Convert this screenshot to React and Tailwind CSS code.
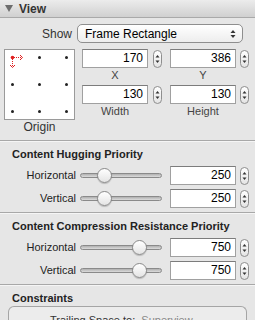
import React from "react";

const font = { fontFamily: '"Liberation Sans", Arial, sans-serif' };

const Stepper = () => (
  <div className="flex h-[18px] w-[9px] items-center justify-center rounded-[5px] border border-[#8e8e8e] bg-gradient-to-b from-white to-[#e4e4e4]">
    <svg width="5" height="12" viewBox="0 0 5 12">
      <path d="M2.5 2 L4.5 4.5 L0.5 4.5 Z" fill="#333" />
      <path d="M2.5 10 L4.5 7.5 L0.5 7.5 Z" fill="#333" />
    </svg>
  </div>
);

const NumberField = ({ value, gap = "gap-[4px]" }) => (
  <div className={`flex items-center ${gap}`}>
    <div className="h-[19px] w-[66px] border border-[#a0a0a0] border-t-[#7c7c7c] bg-white pr-[4px] text-right text-[12px] leading-[17px] text-black">
      {value}
    </div>
    <Stepper />
  </div>
);

const Slider = ({ pos }) => (
  <div className="relative h-[15px] w-[82px]">
    <div className="absolute left-0 right-0 top-[5px] h-[5px] rounded-full border border-[#8a8a8a] bg-gradient-to-b from-[#b0b0b0] to-[#dcdcdc]" />
    <div
      className="absolute top-0 h-[15px] w-[15px] rounded-full border border-[#8a8a8a] bg-gradient-to-b from-white to-[#e4e4e4] shadow-[0_1px_1px_rgba(0,0,0,0.2)]"
      style={{ left: pos }}
    />
  </div>
);

const Divider = ({ className = "" }) => (
  <div className={`border-t border-[#a8a8a8] shadow-[0_1px_0_#f5f5f5] ${className}`} />
);

const PriorityRow = ({ label, pos, value }) => (
  <div className="flex h-[23px] items-center">
    <div className="w-[76px] text-right text-[11px] text-[#222]">{label}</div>
    <div className="ml-[4px]">
      <Slider pos={pos} />
    </div>
    <div className="ml-[8px]">
      <NumberField value={value} />
    </div>
  </div>
);

const SectionTitle = ({ children }) => (
  <div className="h-[23px] px-[12px] pt-[6px] text-[11px] font-bold leading-[14px] text-[#222]">
    {children}
  </div>
);

const Dot = () => <div className="h-[3px] w-[3px] rounded-full bg-[#222]" />;

const FrameField = ({ value, label, gap }) => (
  <div className="flex flex-col items-start">
    <NumberField value={value} gap={gap} />
    <div className="mt-[1px] w-[66px] text-center text-[11px] leading-[13px] text-[#444]">{label}</div>
  </div>
);

const OriginMarker = () => (
  <div className="relative h-[3px] w-[3px]">
    <svg className="absolute left-[-2px] top-[-2px]" width="20" height="18" viewBox="0 0 20 18">
      <circle cx="3.5" cy="3.5" r="1.8" fill="#e02020" />
      <path d="M5 3.5 H13" stroke="#e02020" strokeWidth="1" strokeDasharray="1 1" />
      <path d="M11 1 L13.5 3.5 L11 6" stroke="#e02020" fill="none" strokeWidth="1" />
      <path d="M3.5 5 V13" stroke="#e02020" strokeWidth="1" strokeDasharray="1 1" />
      <path d="M1 11 L3.5 13.5 L6 11" stroke="#e02020" fill="none" strokeWidth="1" />
    </svg>
  </div>
);

export default function App() {
  return (
    <div style={font} className="h-[320px] w-[255px] overflow-hidden bg-[#e6e6e6] text-[#222]">
      <div className="flex h-[18px] items-center border-b border-[#a9a9a9] bg-gradient-to-b from-[#ececec] to-[#d0d0d0] pl-[5px]">
        <svg width="8" height="7" viewBox="0 0 8 7">
          <path d="M0 0 L8 0 L4 7 Z" fill="#6d6d6d" />
        </svg>
        <span className="ml-[6px] text-[12px] font-bold text-[#333]">View</span>
      </div>

      <div className="mt-[6px] flex items-center">
        <div className="w-[77px] pr-[5px] text-right text-[12px] text-[#333]">Show</div>
        <div className="flex h-[19px] w-[166px] items-center justify-between rounded-[5px] border border-[#8e8e8e] bg-gradient-to-b from-white to-[#ededed] pl-[7px] pr-[6px] text-[12px] text-black">
          <span>Frame Rectangle</span>
          <svg width="6" height="10" viewBox="0 0 6 10">
            <path d="M3 1 L5.5 4 L0.5 4 Z" fill="#333" />
            <path d="M3 9 L5.5 6 L0.5 6 Z" fill="#333" />
          </svg>
        </div>
      </div>

      <div className="mt-[6px] flex items-start">
        <div className="ml-[4px] flex w-[71px] flex-col items-center">
          <div className="flex h-[71px] w-[71px] flex-col justify-between border border-[#9a9a9a] bg-white px-[6px] py-[6px]">
            <div className="flex justify-between">
              <OriginMarker />
              <Dot />
              <Dot />
            </div>
            <div className="flex justify-between">
              <Dot />
              <Dot />
              <Dot />
            </div>
            <div className="flex justify-between">
              <Dot />
              <Dot />
              <Dot />
            </div>
          </div>
          <div className="text-[12px] leading-[14px] text-[#333]">Origin</div>
        </div>

        <div className="ml-[7px] grid grid-cols-[88px_80px] content-start gap-y-[3px]">
          <FrameField value="170" label="X" gap="gap-[5px]" />
          <FrameField value="386" label="Y" gap="gap-[4px]" />
          <FrameField value="130" label="Width" gap="gap-[5px]" />
          <FrameField value="130" label="Height" gap="gap-[4px]" />
        </div>
      </div>

      <Divider className="mt-[6px]" />
      <SectionTitle>Content Hugging Priority</SectionTitle>
      <PriorityRow label="Horizontal" pos={17} value="250" />
      <PriorityRow label="Vertical" pos={17} value="250" />

      <Divider className="mt-[2px]" />
      <SectionTitle>Content Compression Resistance Priority</SectionTitle>
      <PriorityRow label="Horizontal" pos={52} value="750" />
      <PriorityRow label="Vertical" pos={52} value="750" />

      <Divider className="mt-[2px]" />
      <div className="h-[21px] px-[12px] pt-[6px] text-[11px] font-bold leading-[14px] text-[#222]">Constraints</div>
      <div className="mx-[8px] h-[30px] rounded-t-[6px] border border-b-0 border-[#a5a5a5] bg-[#ececec] pl-[41px] pt-[6px] text-[11px] leading-[14px] text-[#333]">
        Trailing Space to:&nbsp; <span className="text-[#888]">Superview</span>
      </div>
    </div>
  );
}
